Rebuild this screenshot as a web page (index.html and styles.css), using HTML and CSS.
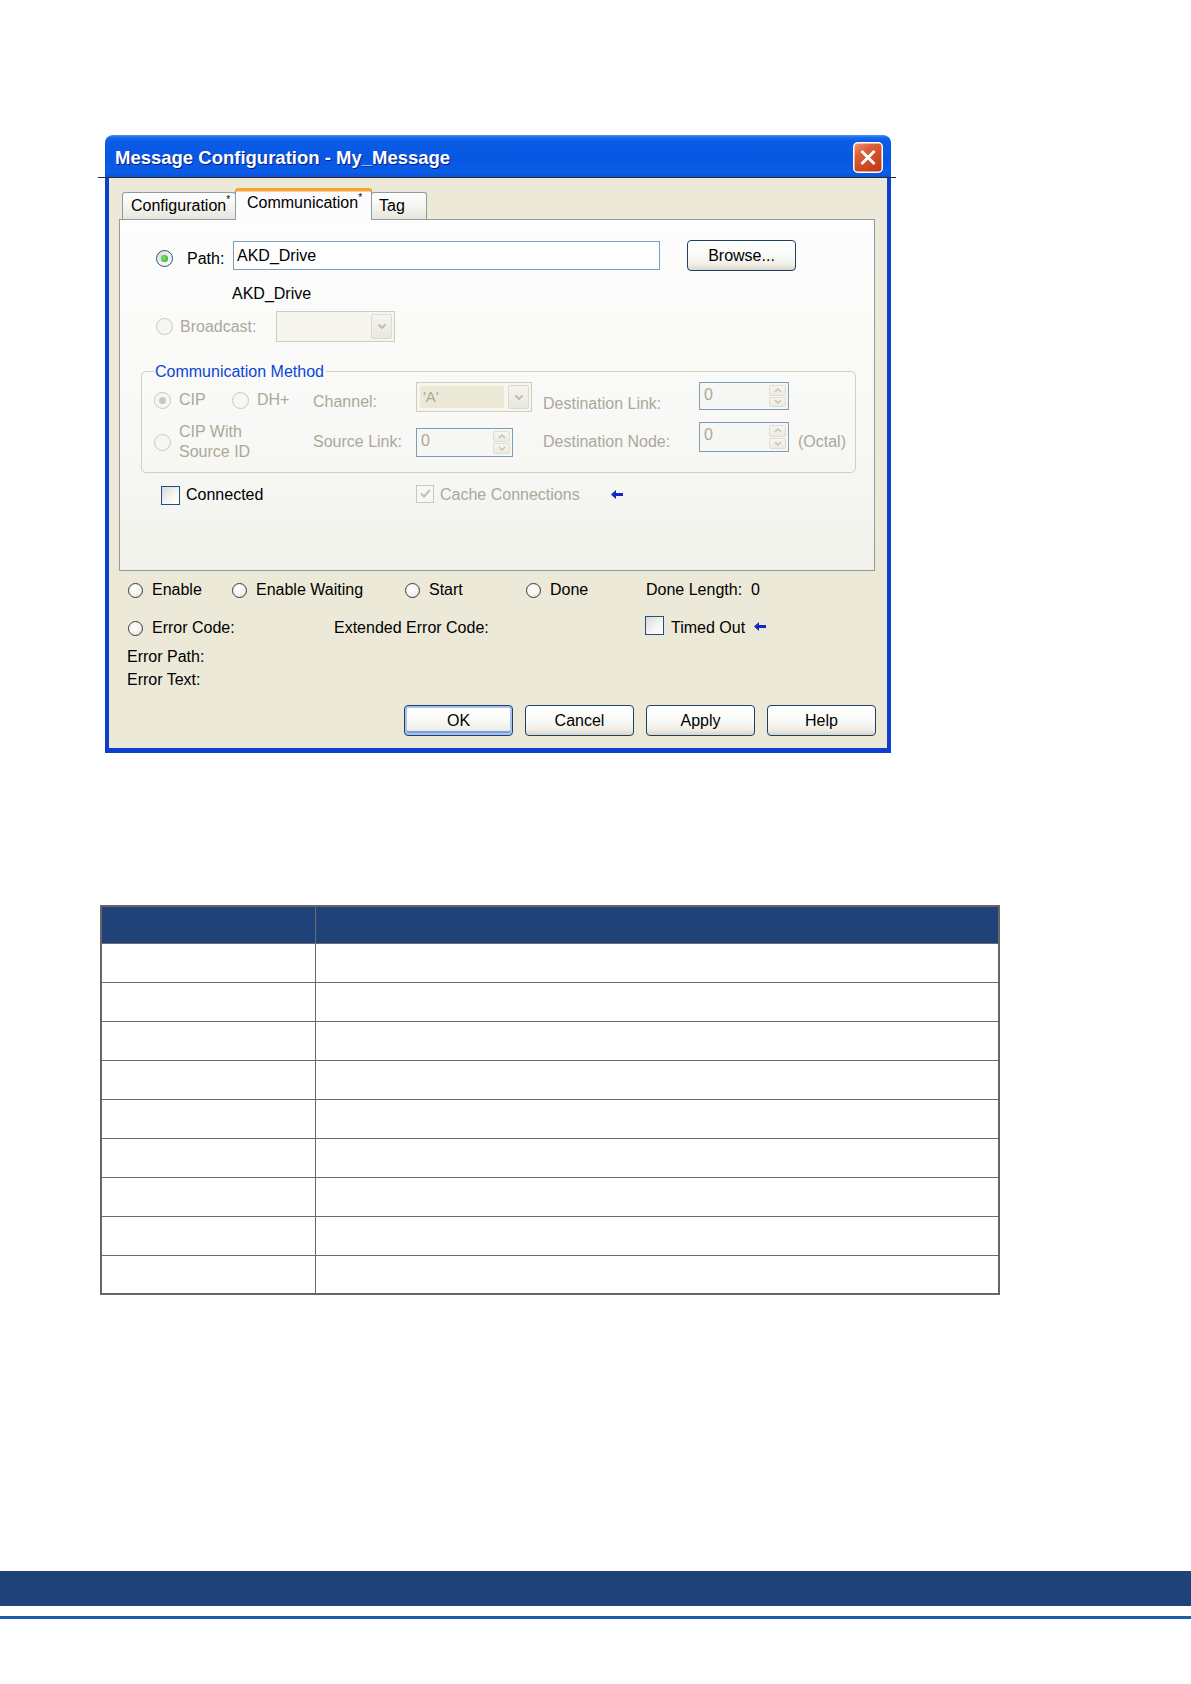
FILE: index.html
```html
<!DOCTYPE html>
<html lang="en">
<head>
<meta charset="utf-8">
<title>Message Configuration - My_Message</title>
<link rel="stylesheet" href="styles.css">
</head>
<body>
<div class="page">
  <div class="dialog">
    <div class="titlebar">
      <span class="title">Message Configuration - My_Message</span>
      <span class="close">
        <svg width="30" height="31" viewBox="0 0 30 31"><defs><linearGradient id="cg" x1="0" y1="0" x2="0.6" y2="1"><stop offset="0" stop-color="#f0a07e"/><stop offset=".35" stop-color="#de6038"/><stop offset="1" stop-color="#c23d19"/></linearGradient></defs><rect x=".75" y=".75" width="28.5" height="29.5" rx="4" fill="url(#cg)" stroke="#fff" stroke-width="1.5"/><path d="M9.5 10l11 11M20.5 10l-11 11" stroke="#fff" stroke-width="3" stroke-linecap="square"/></svg>
      </span>
    </div>
    <div class="dlg-body">
      <div class="tabs">
        <div class="tab t-config">Configuration<sup>*</sup></div>
        <div class="tab t-comm active">Communication<sup>*</sup></div>
        <div class="tab t-tag">Tag</div>
      </div>
      <div class="panel">
        <div class="row-path">
          <span class="radio on shift"></span><span class="lbl-path shift">Path:</span>
          <div class="input">AKD_Drive</div>
          <div class="btn browse">Browse...</div>
        </div>
        <div class="path-echo">AKD_Drive</div>
        <div class="row-bcast">
          <span class="radio dis"></span><span class="lbl-bcast dis-text">Broadcast:</span>
          <div class="combo bc"><span class="field"></span><span class="drop"><svg width="10" height="7" viewBox="0 0 10 7"><path d="M1.5 1.5l3.5 3.5 3.5-3.5" fill="none" stroke="#bdbbb0" stroke-width="1.8"/></svg></span></div>
        </div>
        <div class="group">
          <div class="legend">Communication Method</div>
          <div class="gm">
            <div class="opts r1">
              <span class="opt o-cip"><span class="radio dis on"></span><span class="dis-text">CIP</span></span>
              <span class="opt"><span class="radio dis"></span><span class="dis-text">DH+</span></span>
            </div>
            <span class="dis-text lbl-ch">Channel:</span>
            <div class="combo ch"><span class="sel">'A'</span><span class="drop"><svg width="10" height="7" viewBox="0 0 10 7"><path d="M1.5 1.5l3.5 3.5 3.5-3.5" fill="none" stroke="#bdbbb0" stroke-width="1.8"/></svg></span></div>
            <span class="dis-text lbl-dl">Destination Link:</span>
            <div class="spin s-dl"><span class="val">0</span><span class="arrows"><span class="ar"><svg width="8" height="5" viewBox="0 0 8 5"><path d="M1 4l3-3 3 3" fill="none" stroke="#c4c2b8" stroke-width="1.4"/></svg></span><span class="ar"><svg width="8" height="5" viewBox="0 0 8 5"><path d="M1 1l3 3 3-3" fill="none" stroke="#c4c2b8" stroke-width="1.4"/></svg></span></span></div>
            <span></span>

            <div class="opts">
              <span class="opt"><span class="radio dis"></span><span class="dis-text two">CIP With<br>Source ID</span></span>
            </div>
            <span class="dis-text">Source Link:</span>
            <div class="spin s-sl"><span class="val">0</span><span class="arrows"><span class="ar"><svg width="8" height="5" viewBox="0 0 8 5"><path d="M1 4l3-3 3 3" fill="none" stroke="#c4c2b8" stroke-width="1.4"/></svg></span><span class="ar"><svg width="8" height="5" viewBox="0 0 8 5"><path d="M1 1l3 3 3-3" fill="none" stroke="#c4c2b8" stroke-width="1.4"/></svg></span></span></div>
            <span class="dis-text">Destination Node:</span>
            <div class="spin s-dn"><span class="val">0</span><span class="arrows"><span class="ar"><svg width="8" height="5" viewBox="0 0 8 5"><path d="M1 4l3-3 3 3" fill="none" stroke="#c4c2b8" stroke-width="1.4"/></svg></span><span class="ar"><svg width="8" height="5" viewBox="0 0 8 5"><path d="M1 1l3 3 3-3" fill="none" stroke="#c4c2b8" stroke-width="1.4"/></svg></span></span></div>
            <span class="dis-text">(Octal)</span>
          </div>
        </div>
        <div class="row-conn">
          <span class="c-conn"><span class="cb"></span>Connected</span>
          <span class="c-cache"><span class="cb dis"><svg width="13" height="11" viewBox="0 0 13 11"><path d="M2 5.5l3 3 6-6.5" fill="none" stroke="#c2c0b4" stroke-width="2"/></svg></span><span class="dis-text">Cache Connections</span></span>
          <span class="arrow a-cache"><svg width="12" height="9" viewBox="0 0 12 9"><path d="M0 4.5L5 0v3h7v3H5v3z" fill="#1228c8"/></svg></span>
        </div>
      </div>

      <div class="srow1">
        <span class="st w1"><span class="radio sm"></span>Enable</span>
        <span class="st w2"><span class="radio sm"></span>Enable Waiting</span>
        <span class="st w3"><span class="radio sm"></span>Start</span>
        <span class="st w4"><span class="radio sm"></span>Done</span>
        <span class="st">Done Length:<span class="dl-val">0</span></span>
      </div>
      <div class="srow2">
        <span class="st w5"><span class="radio sm"></span>Error Code:</span>
        <span class="st w6">Extended Error Code:</span>
        <span class="st"><span class="cb tc"></span>Timed Out<span class="arrow a-to"><svg width="12" height="9" viewBox="0 0 12 9"><path d="M0 4.5L5 0v3h7v3H5v3z" fill="#1228c8"/></svg></span></span>
      </div>
      <div class="srow3">Error Path:</div>
      <div class="srow4">Error Text:</div>
      <div class="buttons">
        <div class="btn def">OK</div>
        <div class="btn">Cancel</div>
        <div class="btn">Apply</div>
        <div class="btn">Help</div>
      </div>
    </div>
  </div>

  <table class="grid">
    <colgroup><col class="c1"><col class="c2"></colgroup>
    <thead><tr><th></th><th></th></tr></thead>
    <tbody>
      <tr><td></td><td></td></tr>
      <tr><td></td><td></td></tr>
      <tr><td></td><td></td></tr>
      <tr><td></td><td></td></tr>
      <tr><td></td><td></td></tr>
      <tr><td></td><td></td></tr>
      <tr><td></td><td></td></tr>
      <tr><td></td><td></td></tr>
      <tr><td></td><td></td></tr>
    </tbody>
  </table>

  <div class="band"></div>
  <div class="rule"></div>
</div>
</body>
</html>
```

FILE: styles.css
```css
* { box-sizing: border-box; }

body {
  margin: 0;
  background: #fff;
  font-family: "Liberation Sans", Arial, sans-serif;
  font-size: 16px;
  color: #000;
}

.page {
  width: 1191px;
  height: 1684px;
  overflow: hidden;
  background: #fff;
}

/* ---------- dialog frame ---------- */
.dialog {
  margin: 135px 0 0 105px;
  width: 786px;
}

.titlebar {
  height: 43px;
  border-radius: 8px 8px 0 0;
  background: linear-gradient(to bottom, #4a92f6 0%, #1a68ec 6%, #0a5ce6 14%, #0857e2 55%, #0a5de8 85%, #0a50d8 100%);
  display: flex;
  align-items: center;
  justify-content: space-between;
  padding: 0 8px 0 10px;
}

.title {
  color: #fff;
  font-weight: bold;
  font-size: 18.5px;
  padding-top: 3px;
  text-shadow: 1px 1px 0 #0a1a8a;
}

.close {
  display: flex;
  margin-top: 1px;
}

.dlg-body {
  position: relative;
  height: 575px;
  background: #ece9d8;
  border-style: solid;
  border-color: #0b3fd0;
  border-width: 0 4px 5px 4px;
  padding: 10px 12px 0 10px;
}

.dlg-body::before {
  content: "";
  position: absolute;
  top: -1px;
  left: -11px;
  right: -9px;
  height: 1px;
  background: #2a2a2a;
}

/* ---------- tabs ---------- */
.tabs {
  display: flex;
  align-items: flex-end;
  height: 31px;
  padding-left: 3px;
}

.tab {
  height: 27px;
  border: 1px solid #919b9c;
  border-bottom: none;
  border-radius: 3px 3px 0 0;
  background: linear-gradient(#ffffff, #f3f2ed 60%, #e6e4dc);
  line-height: 26px;
  white-space: nowrap;
}

.tab sup {
  font-size: 10px;
  vertical-align: top;
  line-height: 14px;
}

.t-config { width: 114px; padding-left: 8px; }
.t-tag { width: 56px; padding-left: 7px; margin-left: -1px; }

.tab.active {
  width: 137px;
  height: 32px;
  margin-bottom: -1px;
  margin-left: -1px;
  padding-left: 11px;
  background: #fcfcfe;
  border-top: 3px solid #f4a63a;
  box-shadow: inset 0 1px 0 #ffd27a;
  line-height: 24px;
  position: relative;
  z-index: 1;
}

/* ---------- panel ---------- */
.panel {
  width: 756px;
  height: 352px;
  border: 1px solid #919b9c;
  background: linear-gradient(#fdfdfd, #f8f8f6 60%, #f2f2ec);
}

.row-path {
  margin-top: 20px;
  height: 31px;
  display: flex;
  align-items: center;
  padding-left: 36px;
}

.shift { margin-top: 6px; }

.lbl-path {
  width: 46px;
  margin-left: 14px;
}

.input {
  width: 427px;
  height: 29px;
  border: 1px solid #7f9db9;
  background: #fff;
  padding-left: 3px;
  line-height: 27px;
}

.browse {
  margin-left: 27px;
}

.path-echo {
  margin-top: 13px;
  padding-left: 112px;
  line-height: 20px;
}

.row-bcast {
  margin-top: 7px;
  height: 31px;
  display: flex;
  align-items: center;
  padding-left: 36px;
}

.lbl-bcast {
  width: 96px;
  margin-left: 7px;
}

.dis-text { color: #aca899; }

/* combo boxes */
.combo {
  display: flex;
  border: 1px solid #cfcdc0;
  background: #f6f5ee;
}

.combo.bc { width: 119px; height: 31px; }
.combo.ch { width: 116px; height: 30px; align-self: start; }

.combo .field { flex: 1; }

.combo .sel {
  flex: 1;
  margin: 3px 2px 3px 3px;
  background: #ebe9d6;
  color: #aca899;
  padding-left: 3px;
  line-height: 22px;
  font-size: 15px;
}

.combo .drop {
  width: 21px;
  margin: 2px;
  background: linear-gradient(#f4f3ee, #e9e8e0);
  border: 1px solid #dddbd1;
  border-radius: 2px;
  display: flex;
  align-items: center;
  justify-content: center;
}

/* group box */
.group {
  margin: 29px 0 0 21px;
  width: 715px;
  height: 102px;
  border: 1px solid #d0d0bf;
  border-radius: 5px;
}

.legend {
  width: max-content;
  height: 20px;
  line-height: 20px;
  margin: -10px 0 0 12px;
  padding: 0 2px 0 1px;
  background: #fafaf9;
  color: #0b46d6;
}

.gm {
  display: grid;
  grid-template-columns: 159px 103px 127px 156px 99px auto;
  grid-template-rows: 30px 40px;
  row-gap: 10px;
  padding-left: 12px;
  align-items: center;
  line-height: 20px;
}

.opts { display: flex; align-items: center; }
.opts.r1 { align-self: end; margin-bottom: 2px; }
.opt { display: flex; align-items: center; }
.opt .radio { margin-right: 8px; }
.o-cip { width: 78px; }
.two { line-height: 20px; }

.lbl-ch { align-self: end; }
.lbl-dl { align-self: end; margin-bottom: -2px; }

/* spin boxes */
.spin {
  display: flex;
  width: 90px;
  height: 28px;
  border: 1px solid #7f9db9;
  background: #f6f6f2;
}

.s-dl { align-self: start; }
.s-sl { width: 97px; height: 29px; }
.s-dn { height: 30px; align-self: start; }

.spin .val {
  flex: 1;
  padding-left: 4px;
  color: #aca899;
  line-height: 24px;
}

.spin .arrows {
  width: 17px;
  margin: 2px 2px 2px 0;
  display: flex;
  flex-direction: column;
  gap: 1px;
}

.spin .ar {
  flex: 1;
  background: linear-gradient(#f6f5f0, #ebeae3);
  border: 1px solid #e0ded4;
  border-radius: 2px;
  display: flex;
  align-items: center;
  justify-content: center;
}

/* connected row */
.row-conn {
  margin-top: 12px;
  height: 20px;
  display: flex;
  align-items: center;
  padding-left: 41px;
  line-height: 20px;
}

.c-conn {
  width: 255px;
  display: flex;
  align-items: center;
}

.c-cache { display: flex; align-items: center; }
.c-cache .cb { width: 18px; height: 18px; margin-top: -3px; }

.arrow { display: inline-flex; }
.a-cache { margin-left: 31px; margin-top: -2px; }
.a-to { margin-left: 9px; margin-top: -3px; }

/* ---------- radios & checkboxes ---------- */
.radio {
  flex: none;
  width: 17px;
  height: 17px;
  border-radius: 50%;
  border: 1px solid #1c5180;
  background: radial-gradient(circle at 35% 35%, #dcdcd6 0%, #f4f4f0 55%, #ffffff 100%);
  display: inline-flex;
  align-items: center;
  justify-content: center;
}

.radio.on::after {
  content: "";
  width: 7px;
  height: 7px;
  border-radius: 50%;
  background: radial-gradient(circle at 40% 40%, #7fe07f, #21a121);
}

.radio.dis {
  border-color: #cac8bb;
  background: #f6f6f3;
}

.radio.dis.on::after {
  background: #cac8bb;
}

.radio.sm {
  width: 15px;
  height: 15px;
  border: 1.5px solid #3a3a3a;
  background: radial-gradient(circle at 40% 40%, #ffffff 0%, #f3f3f0 55%, #cfcfca 100%);
  margin-right: 9px;
}

.cb {
  flex: none;
  width: 19px;
  height: 19px;
  border: 1px solid #1c5180;
  background: linear-gradient(135deg, #d8d8d2, #f6f6f3 60%, #ffffff);
  margin-right: 6px;
  display: inline-flex;
  align-items: center;
  justify-content: center;
}

.cb.dis {
  border-color: #cac8bb;
  background: #f7f7f5;
}

.cb.tc { margin-right: 7px; margin-top: -5px; }

/* ---------- status area ---------- */
.srow1,
.srow2 {
  display: flex;
  align-items: center;
  height: 20px;
  line-height: 20px;
  padding-left: 9px;
}

.srow1 { margin-top: 9px; }
.srow2 { margin-top: 18px; }

.st { display: flex; align-items: center; white-space: nowrap; }
.w1 { width: 104px; }
.w2 { width: 173px; }
.w3 { width: 121px; }
.w4 { width: 120px; }
.w5 { width: 206px; }
.w6 { width: 311px; }

.dl-val { margin-left: 9px; }

.srow3 {
  margin-top: 9px;
  padding-left: 8px;
  line-height: 20px;
}

.srow4 {
  margin-top: 3px;
  padding-left: 8px;
  line-height: 20px;
}

/* ---------- buttons ---------- */
.buttons {
  margin-top: 15px;
  margin-right: -1px;
  display: flex;
  justify-content: flex-end;
  gap: 12px;
}

.btn {
  width: 109px;
  height: 31px;
  border: 1px solid #1f3f66;
  border-radius: 4px;
  background: linear-gradient(#ffffff 0%, #fbfbf9 45%, #f0efe8 80%, #d9d5c8 100%);
  display: flex;
  align-items: center;
  justify-content: center;
  line-height: 20px;
}

.btn.def {
  box-shadow: inset 0 0 0 2px #a9c3f0, inset 0 -2px 0 2px #7a9fe6;
}

/* ---------- table ---------- */
.grid {
  margin: 152px 0 0 100px;
  width: 900px;
  border-collapse: collapse;
  border: 2px solid #666;
}

.grid .c1 { width: 214px; }

.grid th,
.grid td {
  border: 1px solid #6b6b6b;
  padding: 0;
}

.grid th {
  height: 37px;
  background: #1f4279;
}

.grid td { height: 39px; }

/* ---------- page footer ---------- */
.band {
  margin-top: 276px;
  height: 35px;
  background: #1f4279;
}

.rule {
  margin-top: 10px;
  height: 3px;
  background: #1d5ca6;
}
```
